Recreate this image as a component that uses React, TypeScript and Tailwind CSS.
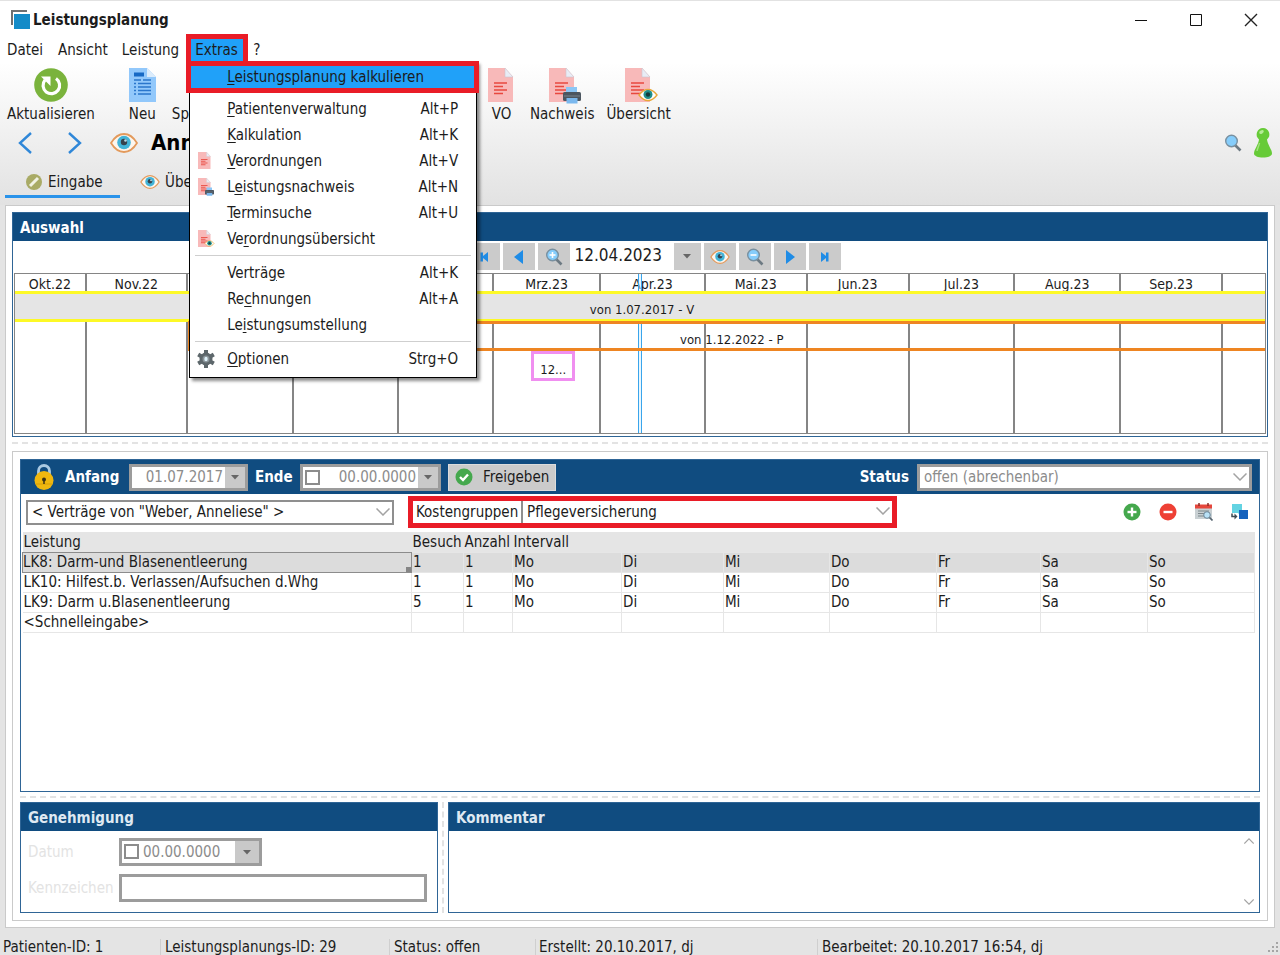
import type { ReactNode } from 'react';

type IconProps = { className?: string };

const menuGroups = [
  [
    { pre: '', key: 'P', post: 'atientenverwaltung', shortcut: 'Alt+P' },
    { pre: '', key: 'K', post: 'alkulation', shortcut: 'Alt+K' },
    { pre: '', key: 'V', post: 'erordnungen', shortcut: 'Alt+V', icon: 'doc' },
    { pre: 'L', key: 'e', post: 'istungsnachweis', shortcut: 'Alt+N', icon: 'print' },
    { pre: '', key: 'T', post: 'erminsuche', shortcut: 'Alt+U' },
    { pre: 'Ve', key: 'r', post: 'ordnungsübersicht', shortcut: '', icon: 'eye' }
  ],
  [
    { pre: 'Verträ', key: 'g', post: 'e', shortcut: 'Alt+K' },
    { pre: 'Re', key: 'c', post: 'hnungen', shortcut: 'Alt+A' },
    { pre: 'Le', key: 'i', post: 'stungsumstellung', shortcut: '' }
  ],
  [{ pre: '', key: 'O', post: 'ptionen', shortcut: 'Strg+O', icon: 'gear' }]
];

const months = ['Okt.22', 'Nov.22', 'Dez.22', 'Jan.23', 'Feb.23', 'Mrz.23', 'Apr.23', 'Mai.23', 'Jun.23', 'Jul.23', 'Aug.23', 'Sep.23', ''];

const columns = [
  { title: 'Leistung', width: 389 },
  { title: 'Besuch', width: 52 },
  { title: 'Anzahl', width: 49 },
  { title: 'Intervall', width: 109 },
  { title: '', width: 102 },
  { title: '', width: 106 },
  { title: '', width: 107 },
  { title: '', width: 104 },
  { title: '', width: 107 },
  { title: '', width: 107 }
];
const totalWidth = columns.reduce((sum, c) => sum + c.width, 0);

const days = ['Mo', 'Di', 'Mi', 'Do', 'Fr', 'Sa', 'So'];
const rows = [
  ['LK8: Darm-und Blasenentleerung', '1', '1', ...days],
  ['LK10: Hilfest.b. Verlassen/Aufsuchen d.Whg', '1', '1', ...days],
  ['LK9: Darm u.Blasenentleerung', '5', '1', ...days],
  ['<Schnelleingabe>', '', '', '', '', '', '', '', '', '']
];

function EyeIcon({ className }: IconProps) {
  return (
    <svg viewBox="0 0 28 20" className={className} aria-hidden="true">
      <path d="M1 10C5 3.500 9.500 1 14 1s9 2.500 13 9c-4 6.500-8.500 9-13 9S5 16.500 1 10Z" fill="#fdf6ee" stroke="#e39a5c" strokeWidth="1.800" />
      <circle cx="14" cy="9.500" r="6.800" fill="#42b4d8" />
      <circle cx="14" cy="9" r="3.200" fill="#35424c" />
      <circle cx="15.500" cy="7.500" r="1.300" fill="#b5dcea" />
    </svg>
  );
}

function DocIcon({ className, badge }: IconProps & { badge?: string }) {
  return (
    <svg viewBox="0 0 34 36" className={className} aria-hidden="true">
      <path d="M1 0h17l8 9v25H1Z" fill="#f8b9b9" />
      <path d="M18 0v9h8Z" fill="#e8edf6" stroke="#cfc4cc" strokeWidth=".6" />
      <path d="M7 15h13M7 18.500h9M7 22h13M7 25.500h9" stroke="#e8483f" strokeWidth="1.700" />
      {badge === 'print' && (
        <g>
          <path d="M18 19h11v6H18z" fill="#8cc6f5" />
          <rect x="15" y="24" width="18" height="9" rx="1.500" fill="#4c5660" />
          <path d="M16 28h16" stroke="#77838d" />
          <path d="M18.500 30h11v5.500h-11z" fill="#7ab8ee" />
        </g>
      )}
      {badge === 'eye' && (
        <g>
          <path d="M15 27c3-4 6-5.500 9-5.500s6 1.500 9 5.500c-3 4-6 5.500-9 5.500s-6-1.500-9-5.500Z" fill="#fff" stroke="#e8a73a" strokeWidth="1.400" />
          <circle cx="24" cy="26.500" r="4.500" fill="#1f8f8b" />
          <circle cx="24" cy="26.500" r="2.200" fill="#123b3a" />
        </g>
      )}
    </svg>
  );
}

function NewIcon({ className }: IconProps) {
  return (
    <svg viewBox="0 0 27 34" className={className} aria-hidden="true">
      <path d="M0 0h18l9 9v25H0Z" fill="#92c8fb" />
      <path d="M18 0v9h9Z" fill="#dcecfb" />
      <path d="M5 4.500h10v4H5z" fill="#1769c4" />
      <path d="M5 12h7M14 12h8M5 15.500h2M9 15.500h13M5 19h2M9 19h13M5 22.500h2M9 22.500h13M5 26h2M9 26h13" stroke="#2a76cc" strokeWidth="1.600" />
    </svg>
  );
}

function RefreshIcon({ className }: IconProps) {
  return (
    <svg viewBox="0 0 34 34" className={className} aria-hidden="true">
      <circle cx="17" cy="17" r="16.800" fill="#7ab33c" />
      <path d="M22 10.500A8.300 8.300 0 1 1 11 12" fill="none" stroke="#fff" strokeWidth="3.200" />
      <path d="M7 8.500h9.500V18Z" fill="#fff" />
    </svg>
  );
}

function MagnifierIcon({ className, sign }: IconProps & { sign?: string }) {
  return (
    <svg viewBox="0 0 18 18" className={className} aria-hidden="true">
      <path d="m11 11 5.500 5.500" stroke="#6d7a83" strokeWidth="2.600" />
      <circle cx="7.500" cy="7" r="5.800" fill="#86cdfb" stroke="#7890a0" strokeWidth="1.400" />
      {sign && <path d="M4.500 7h6" stroke="#fff" strokeWidth="1.600" />}
      {sign === 'plus' && <path d="M7.500 4v6" stroke="#fff" strokeWidth="1.600" />}
    </svg>
  );
}

function GearIcon({ className }: IconProps) {
  return (
    <svg viewBox="0 0 18 18" className={className} aria-hidden="true">
      <path d="M9 0v18M1.200 4.500l15.600 9M1.200 13.500l15.600-9" stroke="#5d676b" strokeWidth="4" />
      <circle cx="9" cy="9" r="5" fill="#8a9499" stroke="#5d676b" strokeWidth="3" />
      <ellipse cx="9" cy="9" rx="1.700" ry="2.200" fill="#dff3fb" />
    </svg>
  );
}

function ChevronDown({ className }: IconProps) {
  return (
    <svg viewBox="0 0 14 8" className={className} fill="none" stroke="#a3a3a3" strokeWidth="1.500" aria-hidden="true">
      <path d="m.5 .5 6.500 6.500L13.500 .5" />
    </svg>
  );
}

function Caret() {
  return (
    <svg viewBox="0 0 8 5" className="h-[5px] w-2" aria-hidden="true">
      <path d="M0 0h8L4 4.500Z" fill="#666" />
    </svg>
  );
}

function PawnIcon({ className }: IconProps) {
  return (
    <svg viewBox="0 0 18 30" className={className} aria-hidden="true">
      <path d="M9 0a6.500 6.500 0 0 1 4 11.500c.5 5 5 10 5 14 0 2.500-4 4-9 4s-9-1.500-9-4c0-4 4.500-9 5-14A6.500 6.500 0 0 1 9 0Z" fill="#67cb38" />
      <ellipse cx="7.500" cy="4" rx="2.500" ry="1.600" fill="#b6eb98" transform="rotate(-30 7.500 4)" />
      <path d="M5.500 15c-.5 3-2 5-2.500 8" stroke="#a3e07f" strokeWidth="1.500" fill="none" />
    </svg>
  );
}

function LockIcon({ className }: IconProps) {
  return (
    <svg viewBox="0 0 20 26" className={className} aria-hidden="true">
      <path d="M4.500 12V7a5.500 5.500 0 0 1 11 0v5" fill="none" stroke="#a9c9e2" strokeWidth="2.800" />
      <circle cx="10" cy="16.500" r="9.500" fill="#efb70f" />
      <path d="M2 20h16" stroke="#d99e07" />
      <circle cx="10" cy="15.500" r="2" fill="#3b3215" />
      <path d="M10 16v4" stroke="#3b3215" strokeWidth="1.500" />
    </svg>
  );
}

function CircleIcon({ kind, className }: IconProps & { kind: string }) {
  return (
    <svg viewBox="0 0 18 18" className={className} fill="none" stroke="#fff" strokeWidth="2.400" aria-hidden="true">
      <circle cx="9" cy="9" r="8.500" fill={kind === 'minus' ? '#ee4035' : '#45a84d'} stroke="none" />
      {kind === 'check' && <path d="m5 9 3 3 5-5.500" />}
      {kind !== 'check' && <path d="M4.500 9h9" />}
      {kind === 'plus' && <path d="M9 4.500v9" />}
    </svg>
  );
}

function CalendarIcon() {
  return (
    <svg viewBox="0 0 18 18" className="size-[18px]" aria-hidden="true">
      <path d="M0 3h17v13H0z" fill="#c9d0d3" />
      <path d="M0 1.500h17v4H0z" fill="#e5473c" />
      <path d="M4 0v3M13 0v3" stroke="#8f2c26" strokeWidth="1.500" />
      <path d="M3 8h11M3 10.500h7M3 13h7" stroke="#7d878c" strokeWidth="1.200" />
      <circle cx="12" cy="12" r="3.300" fill="#b9e2f7" stroke="#6d8698" />
      <path d="m14.500 14.500 3 3" stroke="#566570" strokeWidth="1.700" />
    </svg>
  );
}

function SwapIcon() {
  return (
    <svg viewBox="0 0 18 18" className="size-[18px]" aria-hidden="true">
      <path d="M1 1h10v10H1z" fill="#63d3e2" />
      <path d="M8 7h9v9H8z" fill="#1562bd" />
      <path d="M.5 10v9h7v-9Z" fill="#fff" />
      <path d="M1 10.500v3h4" fill="none" stroke="#3d4a52" strokeWidth="1.500" />
      <path d="m3.500 10.500 3 3-3 3Z" fill="#3d4a52" />
    </svg>
  );
}

function ToolButton({ label, className = '', children }: { label: string; className?: string; children: ReactNode }) {
  return (
    <button type="button" className={`flex flex-col items-center justify-between whitespace-nowrap ${className}`}>
      {children}
      <span className="leading-5">{label}</span>
    </button>
  );
}

function MenuIcon({ name }: { name?: string }) {
  if (name === 'gear') return <GearIcon className="size-[18px]" />;
  if (name) return <DocIcon className="h-[18px] w-[18px]" badge={name} />;
  return null;
}

function ExtrasMenu() {
  return (
    <div role="menu" className="absolute left-[3px] top-[27px] z-20 w-72 border border-t-0 border-black bg-white pb-[5px] shadow-[3px_3px_3px_rgba(0,0,0,0.45)]">
      <button type="button" role="menuitem" className="-mx-1 mb-[3px] flex h-8 w-[293px] items-center border-[5px] border-[#e91c27] bg-[#20a1f9] pl-9">
        <span><u className="underline-offset-2">L</u>eistungsplanung kalkulieren</span>
      </button>
      {menuGroups.map((group, i) => (
        <div key={i} className={i > 0 ? 'mx-[5px] mt-[3px] border-t border-[#cfcfcf] pt-1' : 'mx-[5px]'}>
          {group.map((item) => (
            <button key={item.post} type="button" role="menuitem" className="flex h-[26px] w-full items-center pl-0.5 pr-[13px]">
              <span className="w-[30px] shrink-0"><MenuIcon name={item.icon} /></span>
              <span>{item.pre}<u className="underline-offset-2">{item.key}</u>{item.post}</span>
              <span className="ml-auto">{item.shortcut}</span>
            </button>
          ))}
        </div>
      ))}
    </div>
  );
}

function WindowHeader() {
  return (
    <header className="border-t border-[#e2e2e2] bg-linear-to-b from-white from-30% to-[#e2e2e2] pb-[7px]">
      <div className="flex h-[33px] items-center pl-[11px] pr-[22px] pt-1">
        <svg viewBox="0 0 20 20" className="size-5" aria-hidden="true">
          <path d="M1 15V1h15" fill="none" stroke="#6f7072" strokeWidth="2" />
          <path d="M3 4h16v15H3z" fill="#148bc8" />
        </svg>
        <h1 className="ml-0.5 font-bold">Leistungsplanung</h1>
        <div className="ml-auto flex gap-[41px]">
          <button type="button" aria-label="Minimieren">
            <svg viewBox="0 0 14 14" className="size-3.5"><path d="M1 7.500h12" stroke="#111" /></svg>
          </button>
          <button type="button" aria-label="Maximieren">
            <svg viewBox="0 0 14 14" className="size-3.5"><path d="M1.500 1.500h11v11h-11z" fill="none" stroke="#111" /></svg>
          </button>
          <button type="button" aria-label="Schließen">
            <svg viewBox="0 0 14 14" className="size-3.5"><path d="m1 1 12 12M13 1 1 13" stroke="#222" strokeWidth="1.400" /></svg>
          </button>
        </div>
      </div>

      <nav className="flex h-8 items-center">
        <button type="button" className="pl-[7px] pr-2">Datei</button>
        <button type="button" className="px-[7px]">Ansicht</button>
        <button type="button" className="px-[7px]">Leistung</button>
        <div className="relative">
          <button type="button" aria-haspopup="menu" aria-expanded="true" className="flex h-8 w-[62px] items-center border-[5px] border-[#e91c27] bg-[#20a1f9] pl-1">Extras</button>
          <ExtrasMenu />
        </div>
        <button type="button" className="px-[5px]">?</button>
      </nav>

      <div className="flex h-[58px] gap-4 pl-[7px] pt-0.5">
        <div className="flex w-[465px] shrink-0 gap-4">
          <ToolButton label="Aktualisieren"><RefreshIcon className="size-[34px]" /></ToolButton>
          <ToolButton label="Neu" className="ml-[18px]"><NewIcon className="h-[34px] w-[27px]" /></ToolButton>
          <ToolButton label="Speichern"><NewIcon className="h-[34px] w-[27px]" /></ToolButton>
        </div>
        <div className="flex gap-3">
          <ToolButton label="VO" className="mr-[3px] w-[27px]"><DocIcon className="ml-[5px] h-9 w-[34px]" /></ToolButton>
          <ToolButton label="Nachweis"><DocIcon className="ml-[5px] h-9 w-[34px]" badge="print" /></ToolButton>
          <ToolButton label="Übersicht"><DocIcon className="ml-[5px] h-9 w-[34px]" badge="eye" /></ToolButton>
        </div>
      </div>

      <div className="flex h-[38px] items-center pl-[18px] pr-2">
        <button type="button" aria-label="Zurück">
          <svg viewBox="0 0 14 22" className="h-[22px] w-3.5"><path d="M13 1 2 11l11 10" fill="none" stroke="#2f87d8" strokeWidth="2.400" /></svg>
        </button>
        <button type="button" aria-label="Weiter" className="ml-9">
          <svg viewBox="0 0 14 22" className="h-[22px] w-3.5"><path d="m1 1 11 10L1 21" fill="none" stroke="#2f87d8" strokeWidth="2.400" /></svg>
        </button>
        <EyeIcon className="ml-7 h-5 w-7" />
        <h2 className="ml-[13px] text-[22px] font-bold text-black">Anneliese</h2>
        <MagnifierIcon className="ml-auto size-[18px]" />
        <PawnIcon className="ml-3 h-[30px] w-[18px]" />
      </div>

      <div role="tablist" className="flex h-9 pl-[5px]">
        <button type="button" role="tab" aria-selected="true" className="flex w-[115px] items-center gap-[5px] border-b-[3px] border-[#2a93ea] pl-5 pt-1.5">
          <svg viewBox="0 0 18 18" className="size-[18px]" aria-hidden="true">
            <circle cx="9" cy="9" r="8" fill="#a9ab66" />
            <path d="m5 13 8-8" stroke="#f1f2e4" strokeWidth="3" />
          </svg>
          Eingabe
        </button>
        <button type="button" role="tab" aria-selected="false" className="flex items-center gap-[5px] border-b-[3px] border-transparent pl-5 pt-1.5">
          <EyeIcon className="h-3.5 w-5" />
          Übersicht
        </button>
      </div>
    </header>
  );
}

function StepButton({ label, children }: { label: string; children: ReactNode }) {
  return (
    <button type="button" aria-label={label} className="flex h-[27px] w-8 items-center justify-center bg-[#cbcbcb]">
      {children}
    </button>
  );
}

function Arrow({ left, bar }: { left?: boolean; bar?: boolean }) {
  return (
    <svg viewBox="0 0 14 14" className={left ? 'size-3.5 -scale-x-100' : 'size-3.5'} fill="#1f8ce6" aria-hidden="true">
      {bar ? <path d="M3 2l5 4V2.500h2.500v9H8V8l-5 4Z" /> : <path d="M3 0l9 7-9 7Z" />}
    </svg>
  );
}

const monthGrid = 'grid grid-cols-[72fr_101fr_106fr_106fr_95fr_107fr_105fr_102fr_102fr_106fr_106fr_102fr_42fr]';

function SelectionPanel() {
  return (
    <section className="border border-[#2f6596] bg-white">
      <h2 className="h-7 bg-[#104c80] pl-[7px] font-bold leading-[30px] text-white">Auswahl</h2>
      <div className="mx-auto mt-px flex h-[31px] w-[401px] gap-[3px] pl-7 pt-px">
        <StepButton label="Anfang"><Arrow left bar /></StepButton>
        <StepButton label="Zurück"><Arrow left /></StepButton>
        <StepButton label="Vergrößern"><MagnifierIcon className="size-[18px]" sign="plus" /></StepButton>
        <div className="flex flex-1 pl-0.5">
          <span className="flex-1 text-[17px] leading-[25px]">12.04.2023</span>
          <button type="button" aria-label="Datum wählen" className="flex h-[27px] w-[27px] items-center justify-center bg-[#cbcbcb]"><Caret /></button>
        </div>
        <StepButton label="Ansicht"><EyeIcon className="h-3.5 w-5" /></StepButton>
        <StepButton label="Verkleinern"><MagnifierIcon className="size-[18px]" sign="minus" /></StepButton>
        <StepButton label="Vor"><Arrow /></StepButton>
        <StepButton label="Ende"><Arrow bar /></StepButton>
      </div>

      <div className="relative mx-px mb-0.5 border border-[#858585]">
        <div className={`${monthGrid} h-[17px] text-[14px]`}>
          {months.map((m) => (
            <div key={m} className="overflow-hidden border-r-2 border-[#858585] text-center leading-5 last:border-r-0">{m}</div>
          ))}
        </div>
        <div className={`${monthGrid} h-[142px]`}>
          {months.map((m) => (
            <div key={m} className="border-r-2 border-[#858585] last:border-r-0" />
          ))}
        </div>

        <div className="absolute inset-y-0 left-[49.8%] w-1 border-x border-[#3aa5ec] bg-[#d6effd]/50" />
        <div className="absolute inset-x-0 top-[17px] h-[31px] border-y-[3px] border-[#fdf926] bg-[#e5e5e5] pl-1 text-center text-[13px] leading-8">von 1.07.2017 - V</div>
        <div className="absolute left-[13.8%] right-0 top-[47px] h-[30px] border-[3px] border-r-0 border-[#ee8522] pl-2 text-center text-[13px] leading-8">von 1.12.2022 - P</div>
        <div className="absolute left-[41.3%] top-[77px] h-[30px] w-11 border-[3px] border-[#f08ff0] bg-white text-center text-[13px] leading-8">12...</div>
      </div>
    </section>
  );
}

function DateField({ id, value, className, checkable }: { id: string; value: string; className: string; checkable?: boolean }) {
  return (
    <div className={`flex h-[27px] border-[3px] border-[#9c9c9c] bg-white text-[#8c8c8c] ${className}`}>
      {checkable && (
        <input type="checkbox" aria-label="Datum aktiv" className="ml-0.5 mt-[3px] size-[15px] shrink-0 appearance-none border-2 border-[#8c8c8c]" />
      )}
      <input id={id} readOnly value={value} className="w-0 min-w-0 flex-1 px-0.5 text-right" />
      <button type="button" aria-label="Kalender öffnen" className="flex w-5 shrink-0 items-center justify-center bg-[#c9c9c9]"><Caret /></button>
    </div>
  );
}

function SelectField({ id, label, value, className }: { id: string; label?: string; value: string; className: string }) {
  return (
    <div className={`relative flex bg-white ${className}`}>
      <select id={id} aria-label={label} className="w-full appearance-none pl-1 pr-6">
        <option>{value}</option>
      </select>
      <ChevronDown className="pointer-events-none absolute right-0.5 top-1.5 h-2 w-3.5" />
    </div>
  );
}

function ServiceTable() {
  return (
    <table className="w-full table-fixed border-collapse text-left leading-5">
      <colgroup>
        {columns.map((c, i) => (
          <col key={i} style={{ width: `${(c.width / totalWidth) * 100}%` }} />
        ))}
      </colgroup>
      <thead>
        <tr className="h-5 bg-[#e5e5e5]">
          {columns.map((c, i) => (
            <th key={i} className="whitespace-nowrap p-0 pl-px font-normal">{c.title}</th>
          ))}
        </tr>
      </thead>
      <tbody>
        {rows.map((row, r) => (
          <tr key={row[0]} className={r === 0 ? 'h-5 bg-[#dcdcdc]' : 'h-5'}>
            {row.map((cell, i) => (
              <td
                key={i}
                className={
                  r === 0 && i === 0
                    ? 'whitespace-nowrap border border-[#8c8c8c] p-0 leading-[19px]'
                    : 'whitespace-nowrap border border-[#e6e6e6] p-0 pl-px leading-[19px] first:border-l-0'
                }
              >
                {r === 0 && i === 0 ? (
                  <span className="flex items-end justify-between">
                    {cell}
                    <span className="size-[5px] bg-[#858585]" />
                  </span>
                ) : (
                  cell
                )}
              </td>
            ))}
          </tr>
        ))}
      </tbody>
    </table>
  );
}

function ServicePanel() {
  return (
    <section className="flex flex-1 flex-col border border-[#2f6596] bg-white">
      <div className="flex h-[34px] items-center bg-[#104c80] pl-[13px] pr-[7px] text-white">
        <LockIcon className="h-[26px] w-5" />
        <label htmlFor="anfang" className="ml-[11px] w-16 shrink-0 font-bold">Anfang</label>
        <DateField id="anfang" value="01.07.2017" className="w-[119px]" />
        <label htmlFor="ende" className="ml-[7px] w-[45px] shrink-0 font-bold">Ende</label>
        <DateField id="ende" value="00.00.0000" className="w-[141px]" checkable />
        <button type="button" className="ml-[7px] flex h-[27px] items-center gap-2.5 border border-[#dcdcdc] bg-[#cbcbcb] px-1.5 text-[#1c1c1c]">
          <CircleIcon kind="check" className="size-[18px]" />
          Freigeben
        </button>
        <label htmlFor="status" className="ml-auto mr-2 font-bold">Status</label>
        <SelectField id="status" value="offen (abrechenbar)" className="h-[27px] w-[335px] border-[3px] border-[#9c9c9c] text-[#8c8c8c]" />
      </div>

      <div className="flex h-[38px] items-center pb-0.5 pl-[5px] pr-2.5">
        <SelectField id="vertrag" label="Verträge" value={'< Verträge von "Weber, Anneliese" >'} className="h-[25px] w-[368px] border-2 border-[#8f8f8f]" />
        <div className="ml-3.5 flex h-8 w-[489px] items-stretch border-[5px] border-[#e91c27]">
          <label htmlFor="kostengruppe" className="w-[110px] border-r-2 border-[#8f8f8f] pl-[3px] leading-[22px]">Kostengruppen</label>
          <SelectField id="kostengruppe" value="Pflegeversicherung" className="flex-1" />
        </div>
        <div className="ml-auto flex gap-[18px]">
          <button type="button" aria-label="Hinzufügen"><CircleIcon kind="plus" className="size-[18px]" /></button>
          <button type="button" aria-label="Entfernen"><CircleIcon kind="minus" className="size-[18px]" /></button>
          <button type="button" aria-label="Kalender"><CalendarIcon /></button>
          <button type="button" aria-label="Tauschen"><SwapIcon /></button>
        </div>
      </div>

      <div className="mr-1 flex-1 pl-px">
        <ServiceTable />
      </div>
    </section>
  );
}

function ApprovalPanel() {
  return (
    <section className="w-[418px] shrink-0 border border-[#2f6596] bg-white">
      <h2 className="h-7 bg-[#104c80] pl-[7px] font-bold leading-[30px] text-[#dfe9f2]">Genehmigung</h2>
      <div className="flex flex-col gap-2 pb-2.5 pl-[7px] pr-2.5 pt-[7px]">
        <div className="flex items-center">
          <label htmlFor="datum" className="w-[91px] shrink-0 text-[#e3e3e3]">Datum</label>
          <div className="flex h-7 w-[143px] border-[3px] border-[#9c9c9c] text-[#8c8c8c]">
            <input type="checkbox" aria-label="Datum aktiv" className="ml-0.5 mt-[3px] size-[15px] shrink-0 appearance-none border-2 border-[#8c8c8c]" />
            <input id="datum" readOnly value="00.00.0000" className="w-0 min-w-0 flex-1 pl-1" />
            <button type="button" aria-label="Kalender öffnen" className="flex w-6 items-center justify-center bg-[#c9c9c9]"><Caret /></button>
          </div>
        </div>
        <div className="flex items-center">
          <label htmlFor="kennzeichen" className="w-[91px] shrink-0 text-[#e3e3e3]">Kennzeichen</label>
          <input id="kennzeichen" className="h-7 min-w-0 flex-1 border-[3px] border-[#9c9c9c] px-1" />
        </div>
      </div>
    </section>
  );
}

function CommentPanel() {
  return (
    <section className="flex flex-1 flex-col border border-[#2f6596] bg-white">
      <h2 id="kommentar" className="h-7 bg-[#104c80] pl-[7px] font-bold leading-[30px] text-[#dfe9f2]">Kommentar</h2>
      <div className="flex flex-1">
        <textarea aria-labelledby="kommentar" className="min-w-0 flex-1 resize-none px-1" />
        <div className="flex w-5 flex-col items-center justify-between py-[7px]">
          <ChevronDown className="h-1.5 w-2.5 rotate-180" />
          <ChevronDown className="h-1.5 w-2.5" />
        </div>
      </div>
    </section>
  );
}

function StatusBar() {
  return (
    <footer className="flex h-[27px] items-center pl-[3px] pt-2.5">
      <span className="w-[157px]">Patienten-ID: 1</span>
      <span className="w-[229px] border-l border-[#cfcfcf] pl-1 leading-4">Leistungsplanungs-ID: 29</span>
      <span className="w-[146px] border-l border-[#cfcfcf] pl-1 leading-4">Status: offen</span>
      <span className="w-[282px] border-l border-[#cfcfcf] pl-[3px] leading-4">Erstellt: 20.10.2017, dj</span>
      <span className="border-l border-[#cfcfcf] pl-1 leading-4">Bearbeitet: 20.10.2017 16:54, dj</span>
      <svg viewBox="0 0 12 12" className="ml-auto size-3" fill="#a5a5a5" aria-hidden="true">
        <path d="M8 1h2v2H8zM8 5h2v2H8zM8 9h2v2H8zM4 5h2v2H4zM4 9h2v2H4zM0 9h2v2H0z" />
      </svg>
    </footer>
  );
}

export default function App() {
  return (
    <div className="flex min-h-screen flex-col bg-[#e4e4e4] font-['DejaVu_Sans_Condensed','DejaVu_Sans',sans-serif] text-[15px] leading-5 text-[#1c1c1c]">
      <WindowHeader />
      <main className="mx-[5px] flex flex-1 flex-col border border-[#cacaca] bg-white p-1.5">
        <SelectionPanel />
        <div className="my-[5px] border-t-2 border-dashed border-[#e3e3e3]" />
        <div className="mt-0.5 flex flex-1 flex-col border border-[#cacaca] p-[7px]">
          <ServicePanel />
          <div className="my-1 border-t-2 border-dashed border-[#e3e3e3]" />
          <div className="flex">
            <ApprovalPanel />
            <div className="mx-1 border-l-2 border-dashed border-[#e3e3e3]" />
            <CommentPanel />
          </div>
        </div>
      </main>
      <StatusBar />
    </div>
  );
}
